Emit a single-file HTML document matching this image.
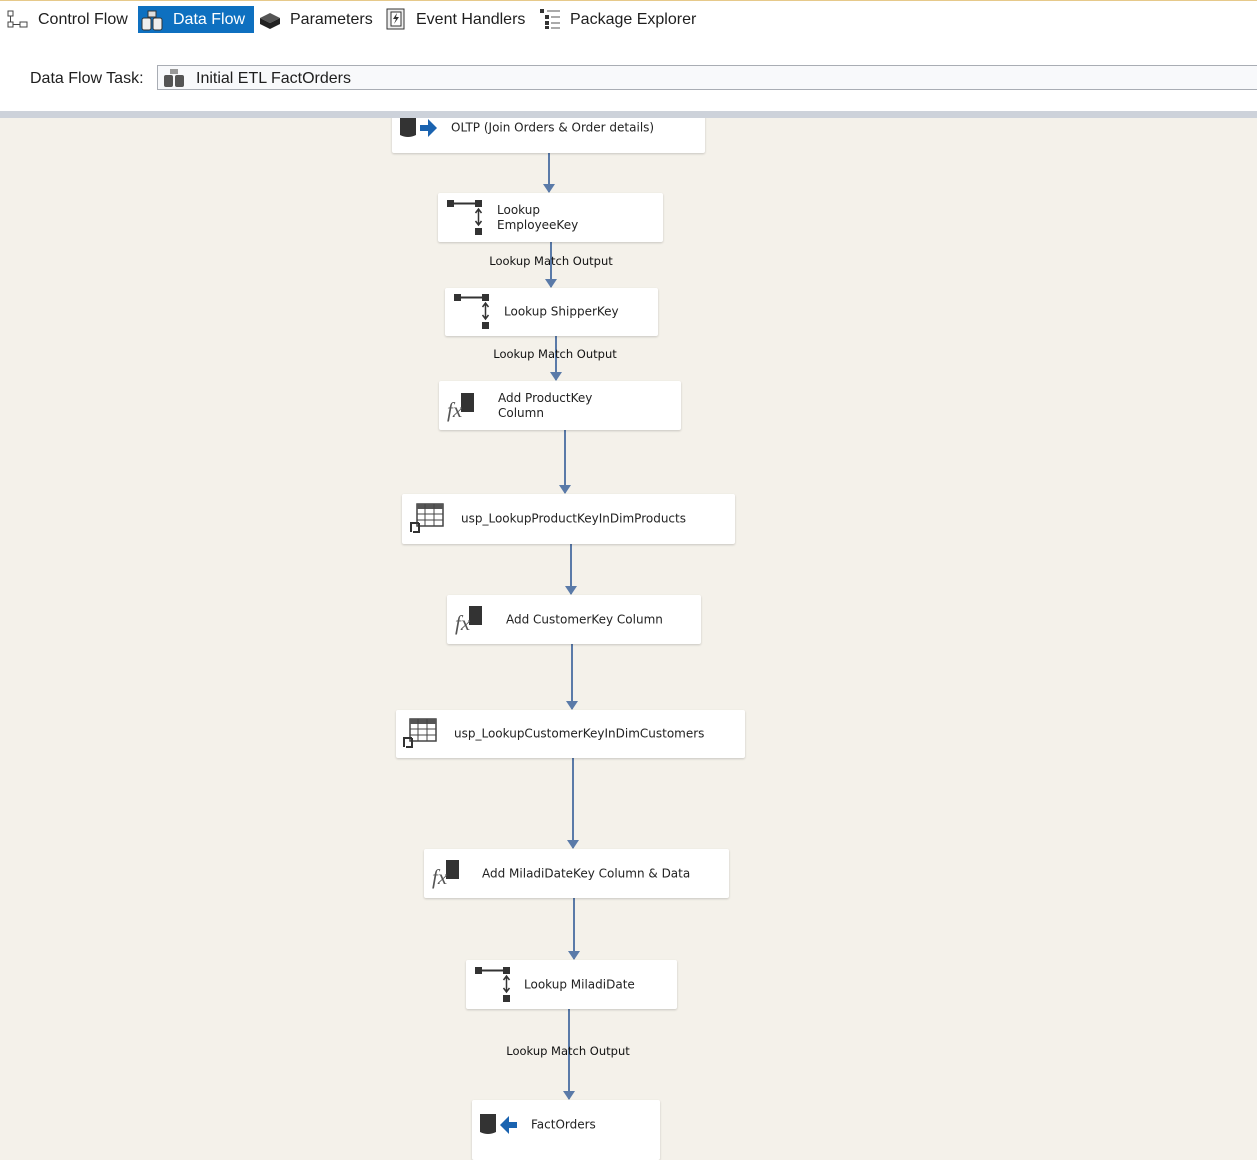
<!DOCTYPE html><html><head><style>
body{margin:0;width:1257px;height:1144px;overflow:hidden;background:#f4f1ea;font-family:"DejaVu Sans","Liberation Sans",sans-serif;position:relative}
.top{position:absolute;left:0;top:0;width:1257px;height:111px;background:#fff;border-top:1px solid #e6c98a;box-sizing:border-box;z-index:5}
.band{position:absolute;left:0;top:111px;width:1257px;height:7px;background:#cdd2da;z-index:5}
.tab{position:absolute;top:6px;height:27px;line-height:27px;font-family:"Liberation Sans",sans-serif;font-size:16px;color:#1e1e1e;white-space:nowrap;z-index:6}
.sel{background:#0e70c0;color:#fff}
.box{position:absolute;background:#fff;border-radius:2px;box-shadow:0 1px 2px rgba(0,0,0,.18);font-size:12px;color:#222;box-sizing:border-box}
.box .t{position:absolute;top:50%;transform:translateY(-50%);line-height:15px;white-space:nowrap}
.ar{position:absolute;width:2px;background:#5a7aa8}
.ar:after{content:"";position:absolute;left:-5px;bottom:-1px;border-left:6px solid transparent;border-right:6px solid transparent;border-top:9px solid #5a7aa8}
.lbl{position:absolute;font-size:11.5px;color:#111;transform:translateX(-50%);white-space:nowrap}
svg{position:absolute;overflow:visible}
.hs{z-index:6}
</style></head><body>
<div class="top"></div>
<svg class="hs" style="left:7px;top:10px" width="22" height="20"><rect x="1" y="1" width="5" height="5" fill="none" stroke="#444"/><rect x="1" y="12" width="5" height="5" fill="none" stroke="#444"/><rect x="13" y="12" width="7" height="5" fill="none" stroke="#444"/><path d="M3.5 6v6M6 14.5h7" stroke="#444"/></svg>
<div class="tab" style="left:38px">Control Flow</div>
<div class="tab sel" style="left:138px;width:116px"><span style="margin-left:35px">Data Flow</span></div>
<svg class="hs" style="left:140px;top:9px" width="26" height="22"><rect x="2" y="9" width="9" height="12" rx="2" fill="#eee" stroke="#333"/><rect x="13" y="9" width="9" height="12" rx="2" fill="#eee" stroke="#333"/><rect x="8" y="2" width="8" height="6" fill="#ddd" stroke="#333"/></svg>
<svg class="hs" style="left:258px;top:10px" width="24" height="20"><path d="M2 8l10-5 10 5-10 5z" fill="#555"/><path d="M2 8v6l10 5v-6zM22 8v6l-10 5v-6z" fill="#222"/></svg>
<div class="tab" style="left:290px">Parameters</div>
<svg class="hs" style="left:386px;top:8px" width="20" height="22"><rect x="1" y="1" width="17" height="20" fill="#eee" stroke="#333"/><rect x="5" y="4" width="10" height="14" fill="#fff" stroke="#333"/><path d="M11 5l-4 6h3l-2 5 5-7h-3z" fill="#333"/></svg>
<div class="tab" style="left:416px">Event Handlers</div>
<svg class="hs" style="left:539px;top:8px" width="22" height="22"><rect x="1" y="1" width="4" height="4" fill="#333"/><rect x="6" y="7" width="4" height="4" fill="#333"/><rect x="6" y="13" width="4" height="4" fill="#333"/><rect x="6" y="18" width="4" height="3" fill="#333"/><path d="M8 3h13M12 9h9M12 15h9M12 20h9" stroke="#555"/></svg>
<div class="tab" style="left:570px">Package Explorer</div>
<div class="tab" style="left:30px;top:65px;font-size:16px">Data Flow Task:</div>
<div style="position:absolute;left:157px;top:65px;width:1110px;height:25px;border:1px solid #a9adb4;background:#f8f9fb;box-sizing:border-box;z-index:6"></div>
<svg class="hs" style="left:163px;top:68px;z-index:7" width="24" height="20"><rect x="1" y="7" width="9" height="12" rx="2" fill="#555"/><rect x="12" y="7" width="9" height="12" rx="2" fill="#555"/><rect x="7" y="1" width="8" height="5" fill="#999"/></svg>
<div class="tab" style="left:196px;top:65px;font-size:16px;z-index:7">Initial ETL FactOrders</div>
<div class="band"></div>

<div class="ar" style="left:548px;top:153px;height:39px"></div>
<div class="ar" style="left:550px;top:242px;height:45px"></div>
<div class="ar" style="left:555px;top:336px;height:44px"></div>
<div class="ar" style="left:564px;top:430px;height:63px"></div>
<div class="ar" style="left:570px;top:544px;height:50px"></div>
<div class="ar" style="left:571px;top:644px;height:65px"></div>
<div class="ar" style="left:572px;top:758px;height:90px"></div>
<div class="ar" style="left:573px;top:898px;height:61px"></div>
<div class="ar" style="left:568px;top:1009px;height:90px"></div>

<div class="lbl" style="left:551px;top:254px">Lookup Match Output</div>
<div class="lbl" style="left:555px;top:347px">Lookup Match Output</div>
<div class="lbl" style="left:568px;top:1044px">Lookup Match Output</div>

<div class="box" style="left:392px;top:105px;width:313px;height:48px"><svg style="left:8px;top:8px" width="38" height="28"><path d="M0 4h16v18q-8 4-16 0z" fill="#333"/><path d="M20 12h8v-6l9 9-9 9v-6h-8z" fill="#1a63b0"/></svg><span class="t" style="left:59px;top:23px">OLTP (Join Orders &amp; Order details)</span></div>

<svg width="0" height="0" style="position:absolute"><defs><g id="lk"><rect x="0" y="0" width="7" height="7" fill="#333"/><rect x="28" y="0" width="7" height="7" fill="#333"/><path d="M7 3.5h21" stroke="#333" stroke-width="2"/><path d="M31.5 10v14M28.5 13l3-4 3 4M28.5 21l3 4 3-4" stroke="#333" stroke-width="1.5" fill="none"/><rect x="28" y="28" width="7" height="7" fill="#333"/></g>
<g id="fx"><rect x="14" y="0" width="13" height="19" fill="#333"/><text x="0" y="24" font-family="Liberation Serif,serif" font-style="italic" font-size="21" fill="#555">fx</text></g>
<g id="tb"><rect x="6" y="0" width="26" height="22" fill="#fff" stroke="#444" stroke-width="1.5"/><rect x="6" y="0" width="26" height="5" fill="#555"/><path d="M6 10h26M6 16h26M14 0v22M23 0v22" stroke="#444"/><path d="M0 28v-9h8M8 19v9H2" stroke="#333" stroke-width="2" fill="none"/></g></defs></svg>

<div class="box" style="left:438px;top:193px;width:225px;height:49px"><svg style="left:9px;top:7px" width="36" height="36"><use href="#lk"/></svg><span class="t" style="left:59px">Lookup<br>EmployeeKey</span></div>
<div class="box" style="left:445px;top:288px;width:213px;height:48px"><svg style="left:9px;top:6px" width="36" height="36"><use href="#lk"/></svg><span class="t" style="left:59px">Lookup ShipperKey</span></div>
<div class="box" style="left:439px;top:381px;width:242px;height:49px"><svg style="left:8px;top:12px" width="32" height="28"><use href="#fx"/></svg><span class="t" style="left:59px">Add ProductKey<br>Column</span></div>
<div class="box" style="left:402px;top:494px;width:333px;height:50px"><svg style="left:9px;top:10px" width="34" height="30"><use href="#tb"/></svg><span class="t" style="left:59px">usp_LookupProductKeyInDimProducts</span></div>
<div class="box" style="left:447px;top:595px;width:254px;height:49px"><svg style="left:8px;top:11px" width="32" height="28"><use href="#fx"/></svg><span class="t" style="left:59px">Add CustomerKey Column</span></div>
<div class="box" style="left:396px;top:710px;width:349px;height:48px"><svg style="left:8px;top:9px" width="34" height="30"><use href="#tb"/></svg><span class="t" style="left:58px">usp_LookupCustomerKeyInDimCustomers</span></div>
<div class="box" style="left:424px;top:849px;width:305px;height:49px"><svg style="left:8px;top:11px" width="32" height="28"><use href="#fx"/></svg><span class="t" style="left:58px">Add MiladiDateKey Column &amp; Data</span></div>
<div class="box" style="left:466px;top:960px;width:211px;height:49px"><svg style="left:9px;top:7px" width="36" height="36"><use href="#lk"/></svg><span class="t" style="left:58px">Lookup MiladiDate</span></div>
<div class="box" style="left:472px;top:1100px;width:188px;height:60px"><svg style="left:8px;top:12px" width="38" height="28"><path d="M0 2h16v18q-8 4-16 0z" fill="#333"/><path d="M37 10h-8v-6l-9 9 9 9v-6h8z" fill="#1a63b0"/></svg><span class="t" style="left:59px;top:25px">FactOrders</span></div>
</body></html>
